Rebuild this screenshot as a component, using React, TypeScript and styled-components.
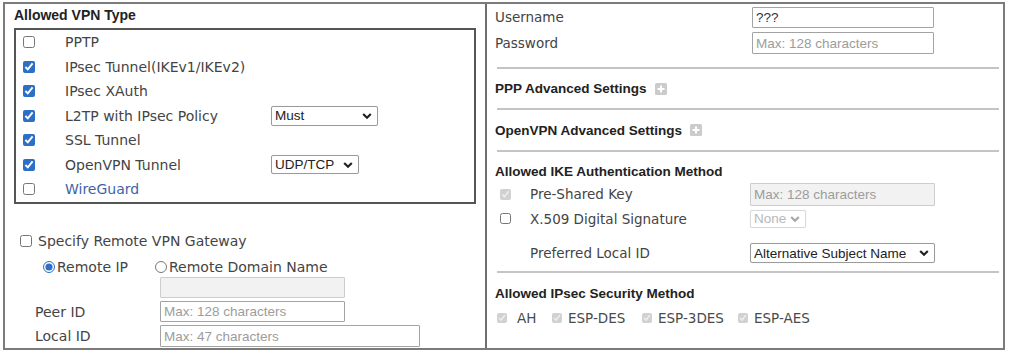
import React from "react";
import styled, { createGlobalStyle } from "styled-components";

const GlobalStyle = createGlobalStyle`
  html, body { margin: 0; padding: 0; background: #fff; }
  body {
    font-family: "DejaVu Sans", Verdana, sans-serif;
    color: #444;
  }
  * { box-sizing: border-box; }
`;

const Frame = styled.div`
  margin: 2px 0 0 3px;
  width: 1002px;
  height: 348px;
  border: 2px solid #7b7b7b;
  display: grid;
  grid-template-columns: 480px 2px 1fr;
`;

const Divider = styled.div`
  background: #6e6e6e;
`;

const Column = styled.div`
  display: flex;
  flex-direction: column;
`;

const Heading = styled.div<{ $h?: number; $size?: number }>`
  font-family: "Liberation Sans", Arial, sans-serif;
  font-weight: bold;
  font-size: ${(p) => p.$size ?? 13.5}px;
  color: #222;
  height: ${(p) => p.$h ?? 22}px;
  display: flex;
  align-items: center;
  gap: 8px;
`;

const TypeBox = styled.div`
  margin: 2px 0 0 9px;
  width: 462px;
  height: 176px;
  border: 2px solid #555;
  display: grid;
  grid-auto-rows: 24.5px;
  padding: 0 0 0 7px;
`;

const TypeRow = styled.div`
  display: grid;
  grid-template-columns: 42px 206px 1fr;
  align-items: center;
  font-size: 14px;
`;

const Label = styled.span<{ $link?: boolean }>`
  color: ${(p) => (p.$link ? "#3d64a8" : "#444")};
  white-space: nowrap;
`;

const Check = styled.input.attrs({ type: "checkbox" })<{ $size?: number }>`
  margin: 0;
  width: ${(p) => p.$size ?? 12}px;
  height: ${(p) => p.$size ?? 12}px;
  accent-color: #2b6fc6;
`;

const Radio = styled.input.attrs({ type: "radio" })`
  margin: 0;
  width: 12px;
  height: 12px;
  accent-color: #2b6fc6;
`;

const SelectWrap = styled.div<{ $w: number; $h: number }>`
  position: relative;
  width: ${(p) => p.$w}px;
  height: ${(p) => p.$h}px;
`;

const NativeSelect = styled.select<{ $off?: boolean }>`
  appearance: none;
  width: 100%;
  height: 100%;
  border: 1px solid ${(p) => (p.$off ? "#c9c9c9" : "#9b9b9b")};
  border-radius: 2px;
  background: #fff;
  color: ${(p) => (p.$off ? "#9a9a9a" : "#222")};
  font-family: "Liberation Sans", Arial, sans-serif;
  font-size: 13.5px;
  padding: 0 0 0 3px;
  box-shadow: 0 0 1px rgba(0, 0, 0, 0.15);
`;

const ChevronIcon = styled.svg`
  position: absolute;
  right: 6px;
  top: 50%;
  transform: translateY(-50%);
  pointer-events: none;
`;

const TextBox = styled.input<{ $w: number; $h: number; $off?: boolean }>`
  width: ${(p) => p.$w}px;
  height: ${(p) => p.$h}px;
  margin: 0;
  border: 1px solid ${(p) => (p.$off ? "#cdcdcd" : "#a3a3a3")};
  border-radius: 1px;
  background: ${(p) => (p.$off ? "#f2f2f2" : "#fff")};
  font-family: "Liberation Sans", Arial, sans-serif;
  font-size: 13.5px;
  color: #333;
  padding: 0 0 0 3px;
  &::placeholder { color: #9c9c9c; }
`;

const GatewayBlock = styled.div`
  padding-left: 15px;
  margin-top: 26px;
  font-size: 14px;
`;

const SpecifyRow = styled.label`
  display: flex;
  align-items: center;
  gap: 6px;
  height: 22px;
`;

const RadioRow = styled.div`
  display: flex;
  align-items: center;
  height: 20px;
  margin-top: 5px;
  padding-left: 23px;
`;

const RadioItem = styled.label<{ $w?: number }>`
  display: flex;
  align-items: center;
  gap: 2px;
  width: ${(p) => (p.$w ? `${p.$w}px` : "auto")};
`;

const FieldRow = styled.div<{ $mt?: number }>`
  display: grid;
  grid-template-columns: 125px auto;
  align-items: center;
  padding-left: 30px;
  margin-top: ${(p) => p.$mt ?? 3}px;
  font-size: 14px;
`;

const RightCol = styled(Column)`
  padding-left: 8px;
`;

const CredRow = styled.div`
  display: grid;
  grid-template-columns: 257px auto;
  align-items: center;
  height: 26px;
  font-size: 13.5px;
`;

const Rule = styled.div<{ $mt?: number }>`
  height: 2px;
  background: #c4c4c4;
  margin: ${(p) => p.$mt ?? 0}px 4px 0 2px;
`;

const Section = styled.div<{ $pt?: number }>`
  padding-top: ${(p) => p.$pt ?? 0}px;
`;

const MethodRow = styled.div<{ $h?: number; $mt?: number }>`
  display: grid;
  grid-template-columns: 30px 220px auto;
  align-items: center;
  height: ${(p) => p.$h ?? 24}px;
  margin-top: ${(p) => p.$mt ?? 0}px;
  font-size: 13.5px;
  padding-left: 5px;
`;

const EspRow = styled.div`
  display: grid;
  grid-template-columns: 55px 90px 96px auto;
  align-items: center;
  height: 24px;
  margin-top: 2px;
  padding-left: 2px;
  font-size: 13.5px;
`;

const EspItem = styled.label<{ $gap: number }>`
  display: flex;
  align-items: center;
  gap: ${(p) => p.$gap}px;
  color: #4a4a4a;
`;

function Chevron({ off }: { off?: boolean }) {
  return (
    <ChevronIcon width="10" height="7" viewBox="0 0 10 7">
      <polyline
        points="1.2,1.5 5,5.2 8.8,1.5"
        fill="none"
        stroke={off ? "#a6a6a6" : "#222"}
        strokeWidth="2.2"
      />
    </ChevronIcon>
  );
}

function Select({ w, h, value, off }: { w: number; h: number; value: string; off?: boolean }) {
  return (
    <SelectWrap $w={w} $h={h}>
      <NativeSelect $off={off} disabled={off} defaultValue={value}>
        <option>{value}</option>
      </NativeSelect>
      <Chevron off={off} />
    </SelectWrap>
  );
}

function PlusIcon() {
  return (
    <svg width="12" height="12" viewBox="0 0 12 12">
      <rect x="0" y="0" width="12" height="12" rx="1.5" fill="#cbcbcb" />
      <path d="M6 2.5v7M2.5 6h7" stroke="#fff" strokeWidth="2" />
    </svg>
  );
}

const vpnTypes = [
  { name: "PPTP", checked: false },
  { name: "IPsec Tunnel(IKEv1/IKEv2)", checked: true },
  { name: "IPsec XAuth", checked: true },
  { name: "L2TP with IPsec Policy", checked: true, select: { w: 107, h: 20, v: "Must" } },
  { name: "SSL Tunnel", checked: true },
  { name: "OpenVPN Tunnel", checked: true, select: { w: 88, h: 19, v: "UDP/TCP" } },
  { name: "WireGuard", checked: false, link: true },
];

export default function App() {
  return (
    <>
      <GlobalStyle />
      <Frame>
        <Column>
          <Heading $size={14} style={{ paddingLeft: 9 }}>Allowed VPN Type</Heading>
          <TypeBox>
            {vpnTypes.map((t) => (
              <TypeRow key={t.name}>
                <Check defaultChecked={t.checked} />
                <Label $link={t.link}>{t.name}</Label>
                {t.select ? <Select w={t.select.w} h={t.select.h} value={t.select.v} /> : <span />}
              </TypeRow>
            ))}
          </TypeBox>

          <GatewayBlock>
            <SpecifyRow>
              <Check />
              <Label>Specify Remote VPN Gateway</Label>
            </SpecifyRow>
            <RadioRow>
              <RadioItem $w={112}>
                <Radio name="gw" defaultChecked />
                <Label>Remote IP</Label>
              </RadioItem>
              <RadioItem>
                <Radio name="gw" />
                <Label>Remote Domain Name</Label>
              </RadioItem>
            </RadioRow>
          </GatewayBlock>
          <FieldRow $mt={0}>
            <span />
            <TextBox $w={185} $h={21} $off disabled />
          </FieldRow>
          <FieldRow>
            <Label>Peer ID</Label>
            <TextBox $w={185} $h={21} placeholder="Max: 128 characters" />
          </FieldRow>
          <FieldRow>
            <Label>Local ID</Label>
            <TextBox $w={260} $h={22} placeholder="Max: 47 characters" />
          </FieldRow>
        </Column>

        <Divider />

        <RightCol>
          <CredRow>
            <Label>Username</Label>
            <TextBox $w={182} $h={21} defaultValue="???" />
          </CredRow>
          <CredRow>
            <Label>Password</Label>
            <TextBox $w={182} $h={22} placeholder="Max: 128 characters" />
          </CredRow>
          <Rule $mt={11} />
          <Heading $h={39}>
            PPP Advanced Settings <PlusIcon />
          </Heading>
          <Rule />
          <Heading $h={40}>
            OpenVPN Advanced Settings <PlusIcon />
          </Heading>
          <Rule />

          <Section $pt={8}>
            <Heading>Allowed IKE Authentication Method</Heading>
            <MethodRow>
              <Check $size={11} defaultChecked disabled />
              <Label>Pre-Shared Key</Label>
              <TextBox $w={185} $h={23} $off disabled placeholder="Max: 128 characters" />
            </MethodRow>
            <MethodRow $h={25}>
              <Check $size={11} />
              <Label>X.509 Digital Signature</Label>
              <Select w={56} h={18} value="None" off />
            </MethodRow>
            <MethodRow $mt={10}>
              <span />
              <Label>Preferred Local ID</Label>
              <Select w={185} h={20} value="Alternative Subject Name" />
            </MethodRow>
          </Section>
          <Rule $mt={6} />

          <Section $pt={9}>
            <Heading>Allowed IPsec Security Method</Heading>
            <EspRow>
              {["AH", "ESP-DES", "ESP-3DES", "ESP-AES"].map((m, i) => (
                <EspItem key={m} $gap={i === 0 ? 10 : 6}>
                  <Check $size={10} defaultChecked disabled />
                  {m}
                </EspItem>
              ))}
            </EspRow>
          </Section>
        </RightCol>
      </Frame>
    </>
  );
}
